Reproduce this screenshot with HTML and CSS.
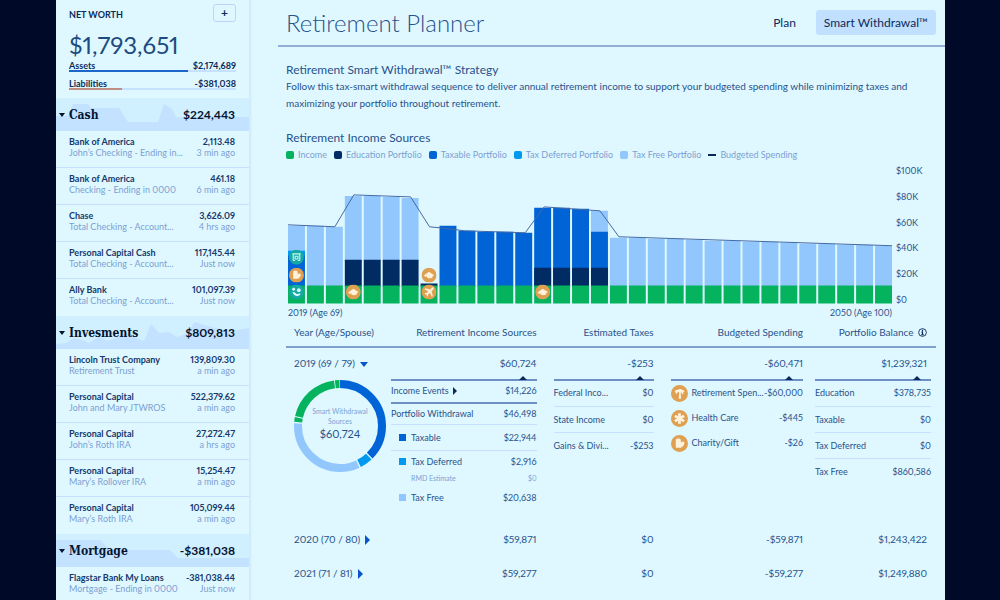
FILE: index.html
```html
<!DOCTYPE html>
<html lang="en">
<head>
<meta charset="utf-8">
<title>Retirement Planner</title>
<meta name="viewport" content="width=device-width, initial-scale=1">
<link rel="stylesheet" href="styles.css">
</head>
<body>
<svg class="sprite" aria-hidden="true">
  <symbol id="i-gift" viewBox="0 0 16 16"><circle cx="8" cy="8" r="8" fill="#dfa052"/><path d="M4.500 5c0-1.200 1-2 2.200-1.700C8 3 9.300 3.600 9.300 5v2l1.400-.7c1.500-.4 2.300 1 1.800 2.200-.4 1.400-1.800 2.800-3.200 3.500H5.500c-.8 0-1-.5-1-1z" fill="#fff2dd"/></symbol>
  <symbol id="i-palm" viewBox="0 0 16 16"><circle cx="8" cy="8" r="8" fill="#dfa052"/><path d="M7.300 13l.4-6-1.200-.3-1.700 2c-.8-.8-.6-1.800 0-2.500l-1.300.3c0-1.600 1.600-2.400 3-2 1.500-1.200 3.200-.9 4 0 1.400 0 2.300 1 2.200 2.400l-1.400-.5c.6 1 .4 2-.3 2.600L9.500 6.900l-.3.200.2 5.900z" fill="#fff2dd"/></symbol>
  <symbol id="i-health" viewBox="0 0 16 16"><circle cx="8" cy="8" r="8" fill="#dfa052"/><path d="M8 3v10M3.700 5.500l8.600 5M12.300 5.500l-8.600 5" stroke="#fff2dd" stroke-width="2.600"/></symbol>
  <symbol id="i-cap" viewBox="0 0 16 16"><circle cx="8" cy="8" r="8" fill="#dfa052"/><path d="M2.500 8.500L8 4.500l5.500 3.500-1.800 1.200v1.500c-1.900 1-4.200 1-5.700 0l-.4-1.500-1.300.8z" fill="#fff2dd"/></symbol>
  <symbol id="i-plane" viewBox="0 0 16 16"><circle cx="8" cy="8" r="8" fill="#dfa052"/><path d="M12.800 3.200c-.8-.7-1.700-.1-2.300.6L9 5.300 4 4l-.9.9 4 2.300-1.700 2-1.500-.2-.7.7 2 1.200 1.100 2 .7-.7-.1-1.500 2-1.700 2.200 4 .9-.9-1.200-5 1.400-1.500c.7-.7 1.300-1.600.6-2.400z" fill="#fff2dd"/></symbol>
  <symbol id="i-bank" viewBox="0 0 16 16"><circle cx="8" cy="8" r="8" fill="#15a9a4"/><path d="M3.500 4.500h9M4.500 4.500v7M11.500 4.500v7M4.500 11.500h2M9.500 11.500h2M6.500 7h3v3h-3z" fill="none" stroke="#c9f5f0" stroke-width="1.200"/></symbol>
  <symbol id="i-pension" viewBox="0 0 16 16"><circle cx="8" cy="8" r="8" fill="#15a9a4"/><circle cx="5" cy="5" r="1.500" fill="#d9fbf6"/><circle cx="10.500" cy="6" r="2" fill="#d9fbf6"/><path d="M3.500 8l2.500.3 2 1.700 4-.5v1.500l-3.500 1.500-3-1.500z" fill="#d9fbf6"/></symbol>
</svg>

<div class="app">
  <aside class="sidebar">
    <section class="net-worth">
      <div class="net-head">
        <h2>NET WORTH</h2>
        <button class="add" type="button" aria-label="Add account">+</button>
      </div>
      <p class="net-total">$1,793,651</p>
      <div class="meter">
        <span>Assets</span><span>$2,174,689</span>
        <i class="track"><i class="fill assets" style="width:71%"></i></i>
      </div>
      <div class="meter">
        <span>Liabilities</span><span>-$381,038</span>
        <i class="track"><i class="fill liabilities" style="width:32%"></i></i>
      </div>
    </section>

    <section>
      <button class="group" type="button">
        <svg class="spark" viewBox="0 0 193 33" preserveAspectRatio="none" aria-hidden="true"><path d="M0 33V18h12L17 6h15l3 4h28l9 14h30l6-18 8 5 4 8h73v14z"/></svg>
        <span class="caret down"></span><span class="group-name">Cash</span><span class="group-total">$224,443</span>
      </button>
      <ul class="accounts">
        <li><b>Bank of America</b><b>2,113.48</b><span>John’s Checking - Ending in...</span><span>3 min ago</span></li>
        <li><b>Bank of America</b><b>461.18</b><span>Checking - Ending in 0000</span><span>6 min ago</span></li>
        <li><b>Chase</b><b>3,626.09</b><span>Total Checking - Account...</span><span>4 hrs ago</span></li>
        <li><b>Personal Capital Cash</b><b>117,145.44</b><span>Total Checking - Account...</span><span>Just now</span></li>
        <li><b>Ally Bank</b><b>101,097.39</b><span>Total Checking - Account...</span><span>Just now</span></li>
      </ul>
    </section>

    <section>
      <button class="group" type="button">
        <svg class="spark" viewBox="0 0 193 33" preserveAspectRatio="none" aria-hidden="true"><path d="M0 33V28l10-1 8-5 8 2 7 3 10-6 9 4 8-3 6-4 8-1 6 5 8 3 7-17 8 9 10-1 8 5 9-3 9-12 12 4 12 3 10 4 8-3 12-2v21z"/></svg>
        <span class="caret down"></span><span class="group-name">Invesments</span><span class="group-total">$809,813</span>
      </button>
      <ul class="accounts">
        <li><b>Lincoln Trust Company</b><b>139,809.30</b><span>Retirement Trust</span><span>a min ago</span></li>
        <li><b>Personal Capital</b><b>522,379.62</b><span>John and Mary JTWROS</span><span>a min ago</span></li>
        <li><b>Personal Capital</b><b>27,272.47</b><span>John’s Roth IRA</span><span>a hrs ago</span></li>
        <li><b>Personal Capital</b><b>15,254.47</b><span>Mary’s Rollover IRA</span><span>a min ago</span></li>
        <li><b>Personal Capital</b><b>105,099.44</b><span>Mary’s Roth IRA</span><span>a min ago</span></li>
      </ul>
    </section>

    <section>
      <button class="group" type="button">
        <svg class="spark" viewBox="0 0 193 33" preserveAspectRatio="none" aria-hidden="true"><path d="M0 33V6h44l10 10h60l8 8h71v9z"/></svg>
        <span class="caret down"></span><span class="group-name">Mortgage</span><span class="group-total">-$381,038</span>
      </button>
      <ul class="accounts">
        <li><b>Flagstar Bank My Loans</b><b>-381,038.44</b><span>Mortgage - Ending in 0000</span><span>Just now</span></li>
      </ul>
    </section>
  </aside>

  <main class="main">
    <header class="top">
      <h1>Retirement Planner</h1>
      <nav class="tabs">
        <a href="#plan">Plan</a>
        <a href="#withdrawal" class="active" aria-current="page">Smart Withdrawal™</a>
      </nav>
    </header>

    <div class="content">
      <section class="intro">
        <h2>Retirement Smart Withdrawal™ Strategy</h2>
        <p>Follow this tax-smart withdrawal sequence to deliver annual retirement income to support your budgeted spending while minimizing taxes and maximizing your portfolio throughout retirement.</p>
      </section>

      <section>
        <h2>Retirement Income Sources</h2>
        <ul class="legend">
          <li><i class="swatch income"></i>Income</li>
          <li><i class="swatch education"></i>Education Portfolio</li>
          <li><i class="swatch taxable"></i>Taxable Portfolio</li>
          <li><i class="swatch deferred"></i>Tax Deferred Portfolio</li>
          <li><i class="swatch free"></i>Tax Free Portfolio</li>
          <li><i class="swatch line"></i>Budgeted Spending</li>
        </ul>

        <div class="chart">
          <div class="plot">
            <svg viewBox="0 0 606 140" role="img" aria-label="Income sources by year, 2019 to 2050">
              <path class="free" d="M0 61h17v28H0zM19 61h17v61H19zM38 62h17v60H38zM57 31h17v66H57zM76 31h17v66H76zM95 32h17v65H95zM114 33h17v64h-17zM304 46h17v22h-17zM323 73h17v49h-17zM342 73h17v49h-17zM361 74h17v48h-17zM380 74h17v48h-17zM399 75h17v47h-17zM418 76h17v46h-17zM437 76h17v46h-17zM456 77h17v45h-17zM475 77h17v45h-17zM494 78h17v44h-17zM513 79h17v43h-17zM532 79h17v43h-17zM551 80h17v42h-17zM570 80h17v42h-17zM589 81h17v41h-17z"/>
              <path class="taxable" d="M0 87h17v35H0zM152 61h17v61h-17zM171 66h17v56h-17zM190 67h17v55h-17zM209 67h17v55h-17zM228 68h17v54h-17zM247 43h17v79h-17zM266 43h17v79h-17zM285 44h17v78h-17zM304 67h17v55h-17z"/>
              <path class="deferred" d="M0 86h17v5H0z"/>
              <path class="education" d="M57 95h17v27H57zM76 95h17v27H76zM95 95h17v27H95zM114 95h17v27h-17zM133 119h17v3h-17zM247 103h17v19h-17zM266 103h17v19h-17zM285 103h17v19h-17zM304 103h17v19h-17z"/>
              <path class="income-bars" d="M0 130h606"/>
              <path class="spending" d="M0 60l47 2 19-32 57 2 19 30 10 1 25 3 61 2 19-26 56 4 19 26 274 9"/>
              <use href="#i-bank" x="1" y="85" width="15" height="15"/>
              <use href="#i-gift" x="1" y="103" width="15" height="15"/>
              <use href="#i-pension" x="1" y="120" width="15" height="15"/>
              <use href="#i-cap" x="58" y="120" width="15" height="15"/>
              <use href="#i-cap" x="134" y="103" width="15" height="15"/>
              <use href="#i-plane" x="134" y="120" width="15" height="15"/>
              <use href="#i-cap" x="248" y="120" width="15" height="15"/>
            </svg>
            <div class="x-axis"><span>2019 (Age 69)</span><span>2050 (Age 100)</span></div>
          </div>
          <div class="y-axis"><span>$100K</span><span>$80K</span><span>$60K</span><span>$40K</span><span>$20K</span><span>$0</span></div>
        </div>
      </section>

      <table class="years">
        <colgroup><col class="c-year"><col class="c-income"><col class="c-taxes"><col class="c-spend"><col class="c-balance"></colgroup>
        <thead>
          <tr>
            <th scope="col">Year (Age/Spouse)</th>
            <th scope="col">Retirement Income Sources</th>
            <th scope="col">Estimated Taxes</th>
            <th scope="col">Budgeted Spending</th>
            <th scope="col">Portfolio Balance
              <svg class="info" viewBox="0 0 10 10" aria-hidden="true"><circle cx="5" cy="5" r="4.300" fill="none" stroke="currentColor"/><path d="M5 2v1.500M3.800 4.500H5v3M3.500 7.500h3" fill="none" stroke="currentColor" stroke-width="1.300"/></svg>
            </th>
          </tr>
        </thead>
        <tbody>
          <tr class="year open">
            <th scope="row"><button type="button">2019 (69 / 79)<span class="caret down"></span></button></th>
            <td>$60,724</td><td>-$253</td><td>-$60,471</td><td>$1,239,321</td>
          </tr>
          <tr class="detail">
            <td>
              <div class="donut">
                <svg viewBox="0 0 92 92" aria-hidden="true">
                  <g fill="none" stroke-width="8" transform="rotate(-90 46 46)">
                    <circle cx="46" cy="46" r="42" pathLength="100" stroke="#0063d6" stroke-dasharray="37.500 62.500"/>
                    <circle cx="46" cy="46" r="42" pathLength="100" stroke="#0099f0" stroke-dasharray="4.500 95.500" stroke-dashoffset="-38"/>
                    <circle cx="46" cy="46" r="42" pathLength="100" stroke="#92c7fe" stroke-dasharray="33 67" stroke-dashoffset="-43"/>
                    <circle cx="46" cy="46" r="42" pathLength="100" stroke="#05b25e" stroke-dasharray="1.600 98.400" stroke-dashoffset="-76.500"/>
                    <circle cx="46" cy="46" r="42" pathLength="100" stroke="#05b25e" stroke-dasharray="19.400 80.600" stroke-dashoffset="-78.500"/>
                    <circle cx="46" cy="46" r="42" pathLength="100" stroke="#05b25e" stroke-dasharray="1.600 98.400" stroke-dashoffset="-98.200"/>
                  </g>
                </svg>
                <p class="donut-label"><small>Smart Withdrawal<br>Sources</small>$60,724</p>
              </div>
            </td>
            <td>
              <table class="breakdown income-list">
                <tr class="strong"><th scope="row">Income Events<span class="caret right"></span></th><td>$14,226</td></tr>
                <tr><th scope="row">Portfolio Withdrawal</th><td>$46,498</td></tr>
                <tr class="sub"><th scope="row"><i class="square taxable"></i>Taxable</th><td>$22,944</td></tr>
                <tr class="sub pair"><th scope="row"><i class="square deferred"></i>Tax Deferred</th><td>$2,916</td></tr>
                <tr class="note"><th scope="row">RMD Estimate</th><td>$0</td></tr>
                <tr class="sub last"><th scope="row"><i class="square free"></i>Tax Free</th><td>$20,638</td></tr>
              </table>
            </td>
            <td>
              <table class="breakdown tax-list">
                <tr><th scope="row">Federal Inco...</th><td>$0</td></tr>
                <tr><th scope="row">State Income</th><td>$0</td></tr>
                <tr><th scope="row">Gains &amp; Divi...</th><td>-$253</td></tr>
              </table>
            </td>
            <td>
              <table class="breakdown spend-list">
                <tr><th scope="row"><svg class="icon"><use href="#i-palm"/></svg>Retirement Spen...</th><td>-$60,000</td></tr>
                <tr><th scope="row"><svg class="icon"><use href="#i-health"/></svg>Health Care</th><td>-$445</td></tr>
                <tr><th scope="row"><svg class="icon"><use href="#i-gift"/></svg>Charity/Gift</th><td>-$26</td></tr>
              </table>
            </td>
            <td>
              <table class="breakdown balance-list">
                <tr><th scope="row">Education</th><td>$378,735</td></tr>
                <tr><th scope="row">Taxable</th><td>$0</td></tr>
                <tr><th scope="row">Tax Deferred</th><td>$0</td></tr>
                <tr><th scope="row">Tax Free</th><td>$860,586</td></tr>
              </table>
            </td>
          </tr>
          <tr class="year">
            <th scope="row"><button type="button">2020 (70 / 80)<span class="caret right"></span></button></th>
            <td>$59,871</td><td>$0</td><td>-$59,871</td><td>$1,243,422</td>
          </tr>
          <tr class="year">
            <th scope="row"><button type="button">2021 (71 / 81)<span class="caret right"></span></button></th>
            <td>$59,277</td><td>$0</td><td>-$59,277</td><td>$1,249,880</td>
          </tr>
        </tbody>
      </table>
    </div>
  </main>
</div>
</body>
</html>
```
FILE: styles.css
```css
:root {
  --bg: #dff8ff;
  --ink: #28528c;
  --navy: #0b2a5b;
  --muted: #7c9fd3;
  --rule: #c6e0ff;
  --green: #05b25e;
  --blue: #0063d6;
  --sky: #0099f0;
  --pale: #92c7fe;
}

* { box-sizing: border-box; }

body {
  margin: 0;
  background: #000a28;
  color: var(--ink);
  font: 10px/17px Lato, "Open Sans", sans-serif;
  font-variant-numeric: proportional-nums;
}

h1, h2, p, ul { margin: 0; padding: 0; font-weight: 400; }
ul { list-style: none; }
button { font: inherit; font-variant-numeric: inherit; color: inherit; background: none; border: 0; padding: 0; cursor: pointer; }
a { color: inherit; text-decoration: none; }
table { width: 100%; border-collapse: collapse; }
th, td { padding: 0; font-weight: 400; text-align: right; }

.sprite { display: none; }

.app {
  display: grid;
  grid-template-columns: 193px minmax(0, 1fr);
  min-height: 100vh;
  margin: 0 55px 0 56px;
  background: var(--bg);
}

/* Sidebar */
.sidebar { box-shadow: 2px 0 2px #cfe8fd; }

.net-worth {
  height: 98px;
  padding: 4px 13px 0;
  color: var(--navy);
}
.net-head { display: flex; justify-content: space-between; }
.net-head h2 { font-size: 9px; line-height: 22px; font-weight: 700; }
.add {
  width: 23px;
  height: 18px;
  border: 1px solid #b9d5fb;
  border-radius: 3px;
  font-size: 12px;
  line-height: 14px;
  font-weight: 700;
}
.net-total { font-size: 24px; line-height: 32px; color: #1d4a80; margin-top: 3px; }
.meter {
  display: grid;
  grid-template-columns: 1fr auto;
  align-content: start;
  font-size: 9px;
  line-height: 9px;
  font-weight: 700;
  height: 18px;
}
.track { grid-column: 1 / -1; height: 2px; background: var(--rule); }
.fill { display: block; height: 2px; }
.fill.assets { background: #1b66c9; }
.fill.liabilities { background: #c08f84; }

.group {
  position: relative;
  display: flex;
  align-items: center;
  width: 100%;
  height: 33px;
  padding: 0 14px 0 3px;
  background: #d0efff;
  color: #04142f;
}
.spark { position: absolute; inset: 0; width: 100%; height: 100%; fill: #c3e2ff; }
.group > span { position: relative; }
.group-name {
  flex: 1;
  margin-left: 4px;
  text-align: left;
  font: 700 12px/16px "DejaVu Serif Condensed", "DejaVu Serif", serif;
}
.group-total { font-size: 12px; font-weight: 700; }

.caret { display: inline-block; border: 0 solid transparent; }
.caret.down { border-width: 4px 3px 0; border-top-color: currentColor; }
.caret.right { border-width: 4px 0 4px 4px; border-left-color: currentColor; }

.accounts li {
  display: grid;
  grid-template-columns: 1fr auto;
  align-content: start;
  height: 37px;
  padding: 5px 14px 0 13px;
  border-bottom: 1px solid var(--rule);
  font-size: 9px;
  line-height: 11px;
  color: var(--muted);
  white-space: nowrap;
}
.accounts li:last-child { border-bottom: 0; }
.accounts b { color: #15396e; }
.accounts li > :nth-child(even) { text-align: right; }

/* Main column */
.main { padding-left: 29px; }
.top {
  display: flex;
  align-items: center;
  justify-content: space-between;
  height: 47px;
  padding: 0 9px 0 8px;
  border-bottom: 2px solid #92add6;
}
.top h1 { font-size: 24px; line-height: 32px; font-weight: 300; }
.tabs { display: flex; gap: 20px; color: #0b2a5b; font-size: 12px; line-height: 25px; }
.tabs .active { padding: 0 8px; border-radius: 3px; background: #c1e0ff; }

.content { padding: 15px 9px 0 8px; }
.content h2 { font-size: 12px; line-height: 16px; }
.intro { margin-bottom: 18px; }

.legend {
  display: flex;
  gap: 7px;
  margin-top: 4px;
  font-size: 9px;
  line-height: 10px;
  color: var(--muted);
}
.legend li { display: flex; align-items: center; gap: 4px; }
.swatch { width: 8px; height: 8px; border-radius: 2px; }
.swatch.line { height: 2px; background: var(--navy); border-radius: 0; }
.income { fill: var(--green); background: var(--green); }
.education { fill: #002b63; background: #002b63; }
.taxable { fill: var(--blue); background: var(--blue); }
.deferred { fill: var(--sky); background: var(--sky); }
.free { fill: var(--pale); background: var(--pale); }

.chart {
  display: grid;
  grid-template-columns: minmax(0, 1fr) 40px;
  gap: 4px;
  align-items: start;
  margin-top: 5px;
  padding-left: 2px;
  font-size: 9px;
  line-height: 12px;
}
.plot svg { display: block; width: 100%; height: auto; }
.plot path { background: none; }
.income-bars { stroke: var(--green); stroke-width: 18; stroke-dasharray: 17 2; }
.spending { fill: none; stroke: #4468a5; stroke-width: 1; }
.x-axis { display: flex; justify-content: space-between; margin-top: 2px; }
.y-axis { display: flex; flex-direction: column; justify-content: space-between; height: 141px; }

/* Year table */
.years { table-layout: fixed; margin-top: 4px; }
.c-year { width: 101px; }
.c-income { width: 23%; }
.c-taxes { width: 18%; }
.c-spend { width: 23%; }
.years > thead th {
  height: 24px;
  padding-bottom: 4px;
  border-bottom: 2px solid #7f9fce;
  white-space: nowrap;
}
.years > thead th:last-child, .year > td:last-child { padding-right: 9px; }
.years > thead th:first-child, .year > th { padding-left: 8px; text-align: left; }
.info { width: 9px; height: 9px; margin-left: 2px; vertical-align: -1px; color: var(--navy); }
.year > * { height: 34px; white-space: nowrap; }
.year.open > * { height: 32px; }
.year .caret { margin-left: 5px; color: #0755c8; }
.year .caret.down { border-width: 5px 4px 0; }
.year .caret.right { vertical-align: -2px; border-width: 5px 0 5px 5px; }

.detail > td { height: 144px; vertical-align: top; }
.donut { position: relative; width: 92px; margin: 1px 0 0 8px; }
.donut svg { display: block; width: 100%; }
.donut-label {
  position: absolute;
  inset: 26px 0 auto;
  text-align: center;
  font-size: 11px;
  line-height: 15px;
}
.donut-label small { display: block; font-size: 7px; line-height: 10px; color: var(--muted); }

.breakdown {
  position: relative;
  width: auto;
  min-width: calc(100% - 17px);
  margin-left: auto;
  border-top: 2px solid #6d8fc4;
  font-size: 9px;
  line-height: 12px;
  white-space: nowrap;
}
.breakdown::before {
  content: "";
  position: absolute;
  top: -4px;
  right: 10px;
  border: solid transparent;
  border-width: 0 4px 4px;
  border-bottom-color: var(--navy);
}
.breakdown th { text-align: left; }
.breakdown tr > * { height: 26px; border-bottom: 1px solid var(--rule); }
.breakdown tr:last-child > * { border-bottom: 0; }
.income-list { min-width: calc(100% - 4px); }
.income-list tr > * { height: 22px; }
.income-list .strong > * { border-bottom: 2px solid #6d8fc4; }
.income-list .strong .caret { margin-left: 4px; vertical-align: -1px; color: var(--navy); }
.income-list .sub > * { height: 26px; }
.income-list .sub > th { padding-left: 8px; }
.income-list .pair > * { height: 22px; }
.income-list .pair > *, .income-list .note > * { border-bottom: 0; }
.income-list .note > * { height: 10px; font-size: 7px; line-height: 10px; color: var(--muted); }
.income-list .note > th { padding-left: 20px; }
.income-list .last > * { height: 30px; }
.square { display: inline-block; width: 7px; height: 7px; margin-right: 5px; }
.spend-list tr > * { height: 25px; border-bottom: 0; }
.icon { width: 17px; height: 17px; margin-right: 4px; vertical-align: middle; }
.balance-list { margin-right: 5px; }
```
